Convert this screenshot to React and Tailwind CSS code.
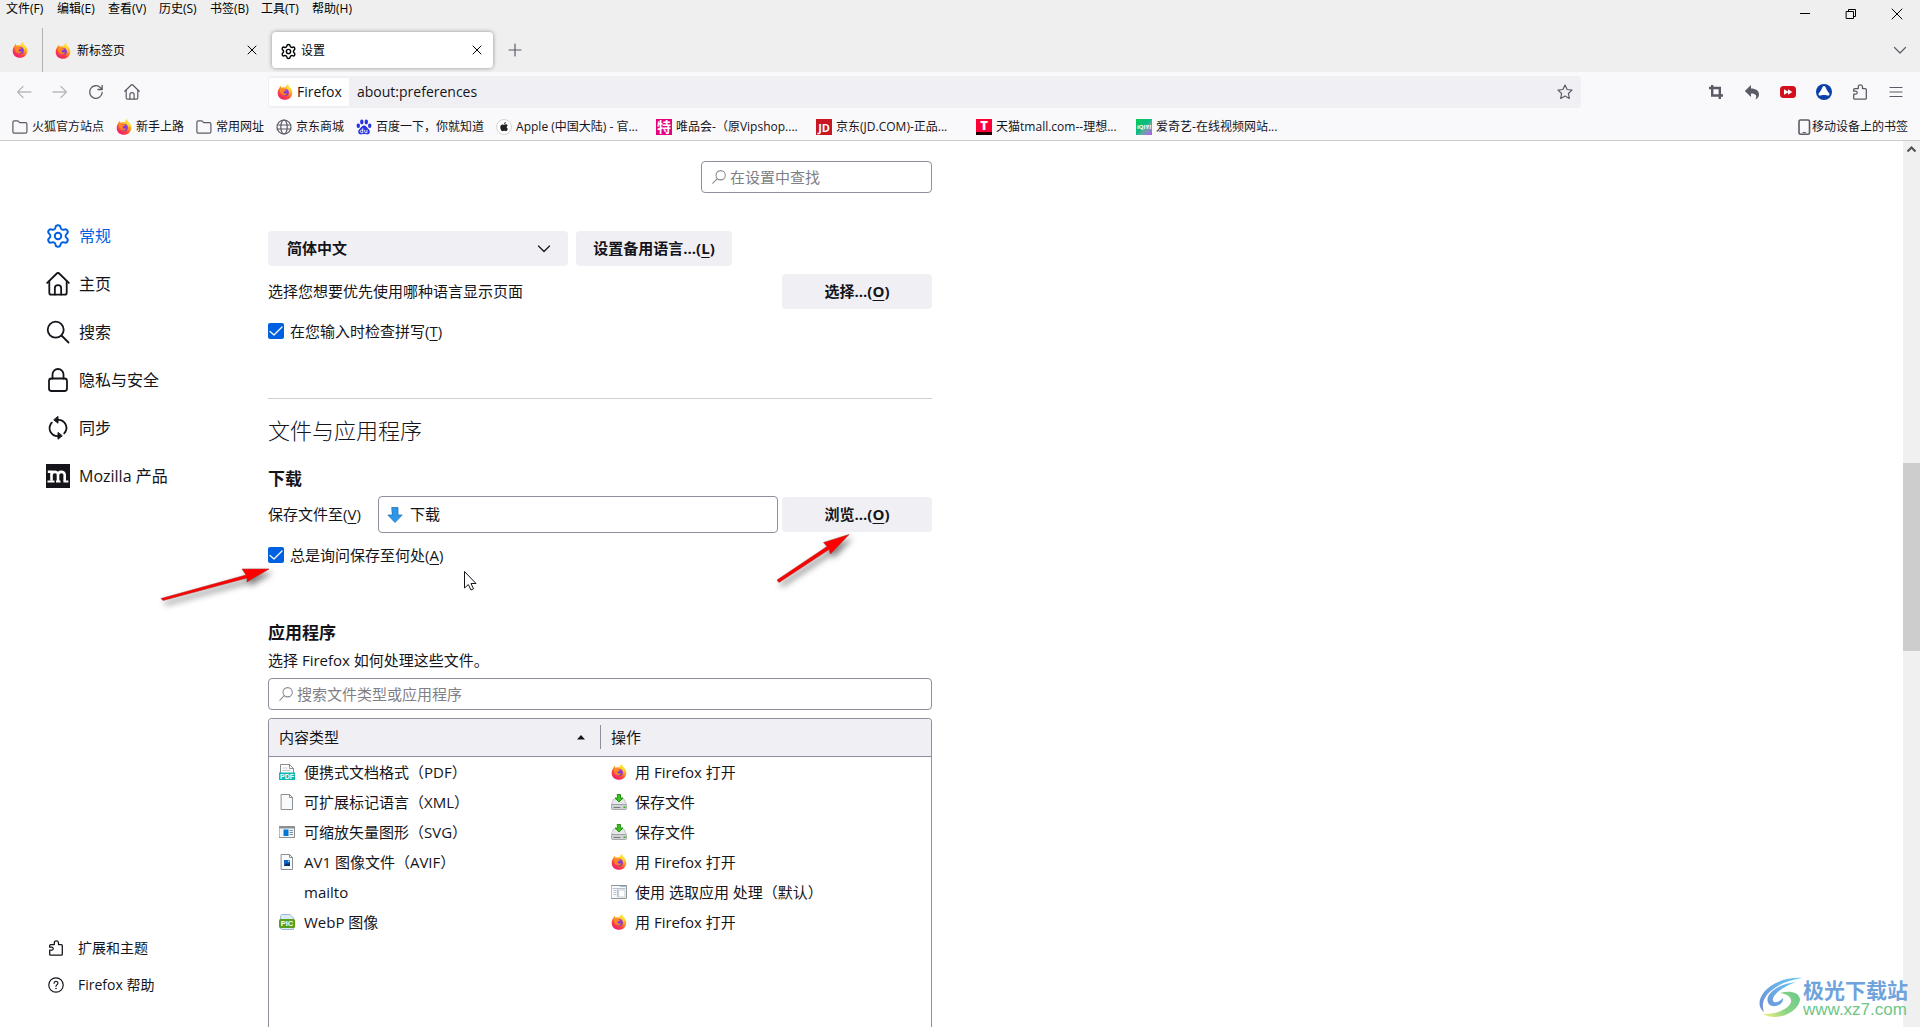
import React, { useId } from "react";
import { Settings } from "lucide-react";

function Svg({ size = 16, box = 16, className = "", children }) {
  return (
    <svg
      width={size}
      height={size}
      viewBox={`0 0 ${box} ${box}`}
      fill="none"
      stroke="currentColor"
      strokeLinecap="round"
      strokeLinejoin="round"
      aria-hidden="true"
      className={`shrink-0 ${className}`}
    >
      {children}
    </svg>
  );
}

function FirefoxLogo() {
  const id = useId();
  return (
    <Svg>
      <defs>
        <linearGradient id={`${id}b`} x1="13" y1="2" x2="4" y2="15" gradientUnits="userSpaceOnUse">
          <stop offset="0.05" stopColor="#fff14a" />
          <stop offset="0.35" stopColor="#ffa51c" />
          <stop offset="0.65" stopColor="#ff4a3c" />
          <stop offset="1" stopColor="#f01a72" />
        </linearGradient>
        <linearGradient id={`${id}c`} x1="10" y1="5" x2="7" y2="12" gradientUnits="userSpaceOnUse">
          <stop offset="0" stopColor="#a238e0" />
          <stop offset="1" stopColor="#5b3ad6" />
        </linearGradient>
        <linearGradient id={`${id}d`} x1="2" y1="3" x2="8" y2="9" gradientUnits="userSpaceOnUse">
          <stop offset="0" stopColor="#ff9a1a" />
          <stop offset="1" stopColor="#ff7a2a" />
        </linearGradient>
      </defs>
      <g stroke="none">
        <path
          fill={`url(#${id}b)`}
          d="M8 15.8C3.9 15.8.7 12.8.7 8.9c0-2.200.8-4 1.900-5.100C2.600 3 3 2.200 3.500 1.800c.2.900.7 1.500 1.400 1.900 1-.5 2.200-.6 3.300-.3C8.900 2.200 10 .8 11.200.1c0 1.300.6 2.200 1.600 3.100 1.600 1.400 2.500 3.200 2.500 5.500 0 4-3.200 7.100-7.300 7.100z"
        />
        <circle cx="8.300" cy="8.500" r="3.500" fill={`url(#${id}c)`} />
        <path
          fill={`url(#${id}d)`}
          d="M2.800 5.200c1.300-1 3.300-.8 4.700.1.800.1 1.600.5 1.900 1-.4.800-1.700.7-2.400 1.300-.5.500-.4 1.300.3 1.700 1 .6 2.100.2 3-.4-.3 1.900-2 3-3.900 2.500C4 10.800 2.500 8.300 2.800 5.200z"
        />
        <path fill="#ffd93b" fillOpacity="0.75" d="M9 2.900c1.900 1 3.600 3 3.500 5.600 1.200-2 .7-4.100-.9-5.800C11 2 11 1.200 11.200.1 10.300.7 9.500 1.800 9 2.900z" />
      </g>
    </Svg>
  );
}

function Folder() {
  return (
    <Svg className="text-[#5b5b66]">
      <path strokeWidth="1.200" d="M.9 12.800V3.200c0-.8.500-1.300 1.300-1.300h3.300c.5 0 .9.200 1.200.6l.9 1.200h5.900c.8 0 1.400.6 1.400 1.400v7.700c0 .8-.6 1.400-1.400 1.400H2.300c-.8 0-1.400-.6-1.400-1.400z" />
    </Svg>
  );
}

function Globe() {
  return (
    <Svg className="text-[#5b5b66]">
      <g strokeWidth="1.200">
        <circle cx="8" cy="8" r="7" />
        <ellipse cx="8" cy="8" rx="3.200" ry="7" />
        <path d="M1.200 6h13.600M1.200 10h13.600" />
      </g>
    </Svg>
  );
}

function Paw() {
  return (
    <Svg>
      <g fill="#2932e1" stroke="none">
        <ellipse cx="5.800" cy="3" rx="1.700" ry="2.400" />
        <ellipse cx="10.300" cy="3" rx="1.700" ry="2.400" />
        <ellipse cx="2.300" cy="6.800" rx="1.700" ry="2.200" />
        <ellipse cx="13.700" cy="6.800" rx="1.700" ry="2.200" />
        <path d="M8 6.600c1.800 0 2.600 1.500 3.700 2.600 1.300 1.200 2.500 2.300 2 4.200-.4 1.700-2 2.200-3.600 1.900-1.400-.3-2.800-.3-4.200 0-1.600.3-3.200-.2-3.600-1.900-.5-1.900.7-3 2-4.200C5.400 8.100 6.200 6.600 8 6.600z" />
      </g>
      <path stroke="#fff" strokeWidth="0.900" d="M6.800 9.600v4H5.400c-1.600 0-1.600-2.400 0-2.400h1.200M8.800 11.200v1.800c0 .5.300.7.700.7h1.500v-2.500" />
    </Svg>
  );
}

function Apple() {
  return (
    <Svg>
      <circle cx="8" cy="8" r="7.500" fill="#fff" stroke="#d4d4d8" />
      <g fill="#222" stroke="none">
        <path d="M8.100 5.700c.6 0 1.100-.4 1.800-.4.800 0 1.400.4 1.800.9-1.500 1-1.200 3 .2 3.600-.4 1.200-1.200 2.400-2 2.400-.6 0-.9-.4-1.700-.4s-1.100.4-1.700.4C5.500 12.200 4.300 10.200 4.300 8.200c0-1.800 1.100-2.800 2.200-2.800.7 0 1.200.3 1.600.3z" />
        <path d="M8 5.200c0-1.200.7-2 1.800-2.200C9.900 4.200 9 5.200 8 5.200z" />
      </g>
    </Svg>
  );
}

function TextBadge({ children, className }) {
  return (
    <span aria-hidden="true" className={`flex size-4 shrink-0 items-center justify-center leading-none ${className}`}>
      {children}
    </span>
  );
}

function Magnifier({ className }) {
  return (
    <Svg size={14} className={className}>
      <circle cx="9.900" cy="6" r="5.300" strokeWidth="1.200" />
      <path strokeWidth="1.200" d="M6.100 9.900.8 15.200" />
    </Svg>
  );
}

function Puzzle() {
  return (
    <Svg>
      <path
        strokeWidth="1.300"
        d="M1.700 10.200v4c0 .6.400 1 1 1h10.600c.6 0 1-.4 1-1V5.600c0-.6-.4-1-1-1h-2.800V2.900a2.100 2.100 0 0 0-4.200 0v1.700H2.700c-.6 0-1 .4-1 1v1.600h2a1.500 1.500 0 0 1 0 3z"
      />
    </Svg>
  );
}

function HomeIcon({ size = 16, weight = 1.2 }) {
  return (
    <Svg size={size}>
      <g strokeWidth={weight}>
        <path d="M.8 7.300 7.200 1c.5-.5 1.100-.5 1.600 0l6.400 6.300" />
        <path d="M2.200 6.200v7.600c0 .8.500 1.300 1.300 1.300h9c.8 0 1.300-.5 1.300-1.300V6.200" />
        <path d="M5.900 15v-4.300c0-1.200.9-2 2.100-2s2.100.8 2.100 2V15" />
      </g>
    </Svg>
  );
}

function MagnifierLarge() {
  return (
    <Svg size={24} box={24}>
      <g strokeWidth="1.800">
        <circle cx="9.700" cy="9.700" r="8" />
        <path d="m15.500 15.500 7 7" />
      </g>
    </Svg>
  );
}

function LockIcon() {
  return (
    <Svg size={24} box={24}>
      <g strokeWidth="1.800">
        <rect x="3" y="10.500" width="18" height="12.500" rx="2.500" />
        <path d="M6.500 10.500V6.500a5.500 5.500 0 0 1 11 0v4" />
      </g>
    </Svg>
  );
}

function SyncIcon() {
  return (
    <Svg size={24} box={24}>
      <g strokeWidth="1.800">
        <path d="M11 3.800h1.500a8 8 0 0 1 7 11.700 6 6 0 0 1-1.300 1.800" />
        <path d="M13 20.200h-1.500a8 8 0 0 1-7-11.700 6 6 0 0 1 1.300-1.800" />
      </g>
      <g fill="currentColor" strokeWidth="1">
        <path d="M12 .8v6.400L8 4z" />
        <path d="M12 16.800v6.400l4-3.200z" />
      </g>
    </Svg>
  );
}

function MozillaIcon() {
  return (
    <span aria-hidden="true" className="flex size-6 shrink-0 items-center justify-center bg-[#15141a]">
      <svg width="24" height="24" viewBox="0 0 24 24" fill="none" stroke="#fff" strokeWidth="2.600">
        <path d="M1.800 7.700h3.700v9M5.500 11c0-4 6.500-4.300 6.500 0v6M12 11c0-4 6.700-4.300 6.700 0v6" />
        <path strokeWidth="2" d="M1.500 17.400h7M10 17.400h4.500M17.400 17.400h5" />
      </svg>
    </span>
  );
}

function HelpIcon() {
  return (
    <Svg>
      <g strokeWidth="1.200">
        <circle cx="8" cy="8" r="7.200" />
        <path d="M6.100 6.200a1.900 1.900 0 1 1 2.900 1.600c-.6.400-1 .8-1 1.500" />
      </g>
      <circle cx="8" cy="11.500" r="0.800" fill="currentColor" stroke="none" />
    </Svg>
  );
}

function PdfFile() {
  return (
    <Svg>
      <path fill="#fff" stroke="#8a8f94" d="M1.500 9V.5h9l4 4V9" />
      <path stroke="#8a8f94" d="M10.500.5v4h4" />
      <path stroke="#c4c8cc" d="M4 4h4M4 6.500h7" />
      <rect y="8.500" width="16" height="7.500" fill="#10b5ad" stroke="none" />
      <text x="8" y="14.800" textAnchor="middle" fill="#fff" stroke="none" fontSize="7" fontWeight="700" fontFamily="Liberation Sans, sans-serif">PDF</text>
    </Svg>
  );
}

function BlankFile({ picture }) {
  return (
    <Svg>
      <path fill="#f8fafc" stroke="#8a8f94" strokeWidth="1" d="M2.500.5h8l3 3v12h-11z" />
      <path stroke="#8a8f94" d="M10.500.5v3h3" />
      {picture && (
        <g stroke="none">
          <rect x="5" y="6" width="6" height="6" fill="#0a66c8" />
          <path fill="#0b2f5c" d="m5 12 2.500-3 1.500 1 2-1.500V12z" />
          <rect x="9" y="6.500" width="1.500" height="1.500" fill="#9fd4ff" />
        </g>
      )}
    </Svg>
  );
}

function SvgFile() {
  return (
    <Svg>
      <rect x="0.500" y="2.500" width="15" height="11" fill="#f4f6f8" stroke="#8a8f94" />
      <path stroke="#8a8f94" strokeWidth="2" d="M1 3.500h14" />
      <rect x="4.500" y="5.500" width="5" height="6.500" fill="#0078d7" stroke="none" />
      <path stroke="#8a8f94" strokeLinecap="butt" d="M10.500 6.500H14M10.500 8.500H14M10.500 10.500H14" />
    </Svg>
  );
}

function PicFile() {
  return (
    <Svg>
      <path fill="#dbeaf6" stroke="#9dbbd3" d="M1.500 14V2.500c0-1 .5-2 1.500-2h8l3.500 3.500v11.500H3c-1 0-1.500-.6-1.500-1.500z" />
      <rect y="5" width="16" height="9" rx="1.500" fill="#57a01c" stroke="none" />
      <text x="8" y="12.300" textAnchor="middle" fill="#fff" stroke="none" fontSize="7.500" fontWeight="700" fontFamily="Liberation Sans, sans-serif">PIC</text>
    </Svg>
  );
}

function SaveDisk() {
  return (
    <Svg>
      <path fill="#e6e7e8" stroke="#b5b7ba" strokeWidth="0.800" d="M3 5h10l2.500 5.500H.5z" />
      <rect x="0.500" y="10.500" width="15" height="5" rx="1" fill="#cfd1d3" stroke="#97999c" strokeWidth="0.800" />
      <path stroke="#5e6165" d="M3 13.500h6" strokeWidth="0.800" />
      <rect x="12.500" y="12.500" width="2" height="1.500" fill="#35b51b" stroke="none" />
      <path fill="#3fc41f" stroke="#1a8a08" strokeWidth="0.900" d="M6.500.5h3V4H12L8 8 4 4h2.500z" />
    </Svg>
  );
}

function AppWindow() {
  return (
    <Svg>
      <rect x="0.500" y="1.500" width="15" height="13" fill="#f7f9fb" stroke="#8f979e" />
      <path stroke="#b9c2ca" d="M2 4.500h12M6.500 5v8M3 6.500h2M3 8.500h2M3 10.500h2" />
      <rect x="8" y="6" width="6" height="7" fill="#fff" stroke="#c3cbd2" />
      <path stroke="#3f7fc4" strokeLinecap="butt" d="M9.500 2.500h1M11.500 2.500h1M13.500 2.500h1" />
    </Svg>
  );
}

const menus = ["文件(F)", "编辑(E)", "查看(V)", "历史(S)", "书签(B)", "工具(T)", "帮助(H)"];

const bookmarks = [
  [<Folder />, "火狐官方站点"],
  [<FirefoxLogo />, "新手上路"],
  [<Folder />, "常用网址"],
  [<Globe />, "京东商城"],
  [<Paw />, "百度一下，你就知道"],
  [<Apple />, "Apple (中国大陆) - 官...", true],
  [<TextBadge className="bg-[#e4007f] text-sm font-bold text-white">特</TextBadge>, "唯品会-（原Vipshop....", true],
  [<TextBadge className="bg-[#c81623] text-[11px] font-bold text-white">JD</TextBadge>, "京东(JD.COM)-正品...", true],
  [<TextBadge className="border-b-3 border-[#220000] bg-[#ff0036] text-[13px] font-black text-white">T</TextBadge>, "天猫tmall.com--理想...", true],
  [<TextBadge className="bg-linear-to-br from-[#00cc4c] via-[#12b886] to-[#b14cf0] text-[6px] font-bold text-white">iQIYI</TextBadge>, "爱奇艺-在线视频网站...", true],
];

const categories = [
  [<Settings size={26} strokeWidth={1.8} className="-mx-px shrink-0" />, "常规", true],
  [<HomeIcon size={24} />, "主页"],
  [<MagnifierLarge />, "搜索"],
  [<LockIcon />, "隐私与安全"],
  [<SyncIcon />, "同步"],
  [<MozillaIcon />, "Mozilla 产品"],
];

const fileTypes = [
  [<PdfFile />, "便携式文档格式（PDF）", <FirefoxLogo />, "用 Firefox 打开"],
  [<BlankFile />, "可扩展标记语言（XML）", <SaveDisk />, "保存文件"],
  [<SvgFile />, "可缩放矢量图形（SVG）", <SaveDisk />, "保存文件"],
  [<BlankFile picture />, "AV1 图像文件（AVIF）", <FirefoxLogo />, "用 Firefox 打开"],
  [null, "mailto", <AppWindow />, "使用 选取应用 处理（默认）"],
  [<PicFile />, "WebP 图像", <FirefoxLogo />, "用 Firefox 打开"],
];

function Cross({ label }) {
  return (
    <button type="button" aria-label={label} className="flex size-6 items-center justify-center">
      <Svg size={10} box={10}>
        <path d="m1 1 8 8M9 1 1 9" />
      </Svg>
    </button>
  );
}

function TitleBar() {
  return (
    <header className="flex h-18 items-stretch bg-[#efefef] text-xs text-black">
      <div className="flex min-w-0 flex-1 flex-col">
        <nav aria-label="菜单" className="flex h-[18px] items-center gap-3 pl-1.5">
          {menus.map((m) => (
            <button key={m} type="button" className="w-[39px] text-left whitespace-nowrap">{m}</button>
          ))}
        </nav>
        <div className="mt-2.5 flex flex-1 items-center" role="tablist" aria-label="标签页">
          <button type="button" role="tab" aria-selected="false" aria-label="Firefox" className="flex h-full w-[43px] items-center border-r border-[#b0b0b0] pl-3">
            <FirefoxLogo />
          </button>
          <div className="flex w-[229px] items-center pr-2 pl-3">
            <button type="button" role="tab" aria-selected="false" className="flex flex-1 items-center gap-1.5 pt-0.5">
              <FirefoxLogo />
              新标签页
            </button>
            <Cross label="关闭新标签页" />
          </div>
          <div className="flex h-9 w-[221px] items-center rounded bg-white pr-1 pl-2 shadow-[0_0_4px_rgba(0,0,0,0.4)]">
            <button type="button" role="tab" aria-selected="true" className="flex flex-1 items-center gap-1 pt-0.5">
              <Settings size={17} strokeWidth={2} />
              设置
            </button>
            <Cross label="关闭设置" />
          </div>
          <button type="button" aria-label="新建标签页" className="ml-2 flex size-7 items-center justify-center text-[#5b5b66]">
            <Svg size={14} box={14}>
              <path strokeWidth="1.200" d="M7 1v12M1 7h12" />
            </Svg>
          </button>
        </div>
      </div>
      <div className="flex flex-col items-end justify-between">
        <div className="flex">
          <button type="button" aria-label="最小化" className="flex h-7 w-[46px] items-center justify-center">
            <Svg size={12} box={12}><path strokeLinecap="butt" d="M1 5.500h10" /></Svg>
          </button>
          <button type="button" aria-label="还原" className="flex h-7 w-[46px] items-center justify-center">
            <Svg size={12} box={12}><path strokeLinejoin="miter" d="M1.500 3.500h7v7h-7zM3.500 3.500v-2h7v7h-2" /></Svg>
          </button>
          <button type="button" aria-label="关闭" className="flex h-7 w-[46px] items-center justify-center">
            <Svg size={12} box={12}><path d="m1 1 10 10M11 1 1 11" /></Svg>
          </button>
        </div>
        <button type="button" aria-label="列出所有标签页" className="flex h-11 w-10 items-center justify-center text-[#5b5b66]">
          <Svg><path strokeWidth="1.200" d="m2.500 5.500 5.500 5.500 5.500-5.500" /></Svg>
        </button>
      </div>
    </header>
  );
}

function IconButton({ label, className = "", children }) {
  return (
    <button type="button" aria-label={label} className={`flex h-8 w-9 shrink-0 items-center justify-center ${className}`}>
      {children}
    </button>
  );
}

function Toolbar() {
  return (
    <div className="flex h-10 items-center bg-[#f9f9fb] pr-1.5 pl-1.5 text-[#5b5b66]">
      <div className="flex w-[262px] shrink-0">
        <IconButton label="后退" className="opacity-40">
          <Svg><path strokeWidth="1.300" d="M15 8H1.500M7 2.500 1.500 8 7 13.500" /></Svg>
        </IconButton>
        <IconButton label="前进" className="opacity-40">
          <Svg><path strokeWidth="1.300" d="M1 8h13.500M9 2.500 14.500 8 9 13.500" /></Svg>
        </IconButton>
        <IconButton label="刷新">
          <Svg><path strokeWidth="1.300" d="M14.200 8.500A6.300 6.300 0 1 1 12.400 3.600L14 5.200M14.200 1.300v4.200h-4.200" /></Svg>
        </IconButton>
        <IconButton label="主页"><HomeIcon /></IconButton>
      </div>
      <div className="flex h-8 min-w-0 flex-1 items-center rounded bg-[#f0f0f4] pl-px text-sm text-[#15141a]">
        <span className="flex h-7 w-20 items-center gap-1 rounded-xs bg-white pl-2">
          <FirefoxLogo />
          Firefox
        </span>
        <input aria-label="网址" defaultValue="about:preferences" className="min-w-0 flex-1 bg-transparent pl-2 outline-none" />
        <button type="button" aria-label="收藏" className="flex size-8 items-center justify-center text-[#5b5b66]">
          <Svg><path strokeWidth="1.200" d="m8 1 2.100 4.500 4.900.6-3.600 3.400.9 4.900L8 12l-4.300 2.400.9-4.900L1 6.100l4.900-.6z" /></Svg>
        </button>
      </div>
      <div className="ml-[117px] flex shrink-0">
        <IconButton label="截图">
          <Svg><path strokeWidth="2.400" strokeLinecap="butt" strokeLinejoin="miter" d="M1 4h10.800v11M4.200 1v10.500H15" /></Svg>
        </IconButton>
        <IconButton label="撤销">
          <Svg><path fill="currentColor" stroke="none" d="M7 1v3.500c5 0 8 2.200 8 6 0 2.300-1.500 4.200-3.500 5 1.700-3.700.5-6-4.500-6V13L.8 7z" /></Svg>
        </IconButton>
        <IconButton label="视频下载">
          <Svg>
            <rect y="2" width="16" height="12" rx="3.500" fill="#d4101c" stroke="none" />
            <path fill="#fff" stroke="none" d="M4 5.300v5.400l4-2.300v2.300L12.300 8 8 5.300v2.300z" />
          </Svg>
        </IconButton>
        <IconButton label="扩展">
          <Svg>
            <circle cx="8" cy="8" r="8" fill="#0a3fa8" stroke="none" />
            <path fill="#fff" stroke="none" d="M8 2c.9 0 1.500.9 2 2.200.8 2 2.500 3.800 3.400 5.600.4 1-.1 1.800-1.200 1.800-1.200 0-2.600-.6-4.200-.6s-3 .6-4.200.6c-1.100 0-1.600-.8-1.200-1.800C3.500 8 5.200 6.200 6 4.200 6.500 2.900 7.100 2 8 2z" />
          </Svg>
        </IconButton>
        <IconButton label="扩展管理"><Puzzle /></IconButton>
        <IconButton label="打开应用程序菜单">
          <Svg><path strokeWidth="1.200" d="M2 3.500h12M2 8h12M2 12.500h12" /></Svg>
        </IconButton>
      </div>
    </div>
  );
}

function BookmarksBar() {
  return (
    <nav aria-label="书签" className="flex h-[29px] items-center justify-between border-b border-[#cccccc] bg-[#f9f9fb] px-3 pt-0.5 text-xs text-[#15141a]">
      <div className="flex min-w-0 items-center gap-3">
        {bookmarks.map(([icon, text, long]) => (
          <a key={text} href="#" className={`flex shrink-0 items-center gap-1 whitespace-nowrap ${long ? "w-37" : ""}`}>
            {icon}
            <span>{text}</span>
          </a>
        ))}
      </div>
      <a href="#" className="flex shrink-0 items-center">
        <Svg className="text-[#5b5b66]">
          <rect x="3" y="1" width="10.500" height="14.200" rx="1.500" strokeWidth="1.600" />
          <path d="M7 13.500h2.500" />
        </Svg>
        移动设备上的书签
      </a>
    </nav>
  );
}

function Sidebar() {
  return (
    <aside className="flex w-[268px] shrink-0 flex-col justify-between pt-[71px] pb-6 pl-[46px]">
      <nav aria-label="设置分类" className="flex flex-col text-base">
        {categories.map(([icon, text, active]) => (
          <a key={text} href="#" className={`flex h-12 items-center gap-[9px] ${active ? "text-[#0061e0]" : ""}`}>
            {icon}
            {text}
          </a>
        ))}
      </nav>
      <nav aria-label="更多" className="flex flex-col pl-0.5 text-sm">
        <a href="#" className="flex h-[37px] items-center gap-3.5"><Puzzle />扩展和主题</a>
        <a href="#" className="flex h-[37px] items-center gap-3.5"><HelpIcon />Firefox 帮助</a>
      </nav>
    </aside>
  );
}

function Key({ children }) {
  return <span className="underline underline-offset-3">{children}</span>;
}

function GreyButton({ className, children }) {
  return (
    <button type="button" className={`h-[35px] shrink-0 rounded bg-[#f0f0f4] pb-0.5 font-bold ${className}`}>
      {children}
    </button>
  );
}

function Check({ id, children }) {
  return (
    <div className="flex items-center gap-1.5">
      <span className="relative flex size-4">
        <input id={id} type="checkbox" defaultChecked className="size-4 appearance-none rounded-xs bg-[#0061e0]" />
        <span className="pointer-events-none absolute inset-0 text-white">
          <Svg><path strokeWidth="1.200" d="m2 8.500 4 3.500 8-8" /></Svg>
        </span>
      </span>
      <label htmlFor={id}>{children}</label>
    </div>
  );
}

function SearchField({ placeholder, className }) {
  return (
    <label className={`flex h-8 items-center gap-1 rounded border border-[#8f8f9d] bg-white pb-px pl-2.5 ${className}`}>
      <Magnifier className="text-[#8a8a8e]" />
      <input type="search" aria-label={placeholder} placeholder={placeholder} className="min-w-0 flex-1 bg-transparent outline-none placeholder:text-[#7f7f85]" />
    </label>
  );
}

function Preferences() {
  return (
    <main className="flex w-[664px] min-w-0 flex-col pt-5 text-[15px] leading-5">
      <SearchField placeholder="在设置中查找" className="w-[231px] self-end" />

      <section aria-label="语言" className="mt-[38px] flex flex-col">
        <div className="flex gap-2">
          <div className="relative w-[300px]">
            <select aria-label="语言" className="h-[35px] w-full appearance-none rounded bg-[#f0f0f4] pb-0.5 pl-[19px] font-bold">
              <option>简体中文</option>
            </select>
            <span className="pointer-events-none absolute inset-y-0 right-4 flex items-center">
              <Svg><path strokeWidth="1.200" d="m2.500 5 5.500 5.500L13.500 5" /></Svg>
            </span>
          </div>
          <GreyButton className="w-[156px]">设置备用语言...(<Key>L</Key>)</GreyButton>
        </div>
        <div className="mt-2 flex items-center justify-between">
          <span className="pb-0.5">选择您想要优先使用哪种语言显示页面</span>
          <GreyButton className="w-[150px]">选择...(<Key>O</Key>)</GreyButton>
        </div>
        <div className="mt-3">
          <Check id="spell">在您输入时检查拼写(<Key>T</Key>)</Check>
        </div>
      </section>

      <section aria-labelledby="files" className="mt-[57px] flex flex-1 flex-col border-t border-[#d0d0d4]">
        <h1 id="files" className="mt-[15px] text-[22px] leading-8 font-light">文件与应用程序</h1>
        <h2 className="mt-[21px] text-[17px] leading-6 font-bold">下载</h2>
        <div className="mt-[5px] flex items-center">
          <label htmlFor="folder" className="w-[110px] pb-0.5">保存文件至(<Key>V</Key>)</label>
          <div className="flex h-[37px] flex-1 items-center gap-[7px] rounded border border-[#8f8f9d] pl-2">
            <Svg>
              <path fill="#2f95e8" stroke="#2277bd" strokeWidth="0.800" d="M5 .5h6V8h4.200L8 15.500.8 8H5z" />
            </Svg>
            <input id="folder" readOnly value="下载" className="min-w-0 flex-1 pb-0.5 outline-none" />
          </div>
          <GreyButton className="ml-1 w-[150px]">浏览...(<Key>O</Key>)</GreyButton>
        </div>
        <div className="mt-3">
          <Check id="ask">总是询问保存至何处(<Key>A</Key>)</Check>
        </div>

        <h2 className="mt-14 text-[17px] leading-6 font-bold">应用程序</h2>
        <p className="mt-[5px]">选择 Firefox 如何处理这些文件。</p>
        <SearchField placeholder="搜索文件类型或应用程序" className="mt-2" />

        <div className="mt-2 flex-1 overflow-hidden rounded-t border border-b-0 border-[#8f8f9d]">
          <table className="w-full table-fixed border-collapse text-left">
            <thead className="bg-[#f0f0f4]">
              <tr className="h-[37px] border-b border-[#8f8f9d]">
                <th scope="col" className="w-[332px] p-0 font-normal">
                  <div className="flex h-6 items-center justify-between border-r border-[#8f8f9d] pr-3.5 pl-2.5">
                    内容类型
                    <Svg size={10} box={10}><path fill="currentColor" stroke="none" d="M1 7.500h8L5 3z" /></Svg>
                  </div>
                </th>
                <th scope="col" className="p-0 pl-2.5 font-normal">操作</th>
              </tr>
            </thead>
            <tbody>
              <tr className="h-px"><td colSpan={2} /></tr>
              {fileTypes.map(([icon, type, actionIcon, action]) => (
                <tr key={type} className="h-[30px]">
                  <td className="p-0 pl-2.5">
                    <span className="flex items-center gap-[9px]">
                      <span className="size-4">{icon}</span>
                      {type}
                    </span>
                  </td>
                  <td className="p-0 pl-2.5">
                    <span className="flex items-center gap-2">
                      {actionIcon}
                      {action}
                    </span>
                  </td>
                </tr>
              ))}
            </tbody>
          </table>
        </div>
      </section>
    </main>
  );
}

function Scrollbar() {
  return (
    <div aria-hidden="true" className="ml-auto flex w-[17px] shrink-0 flex-col items-center bg-[#f0f0f0] text-[#505050]">
      <Svg size={17} box={17}><path strokeWidth="2" strokeLinecap="butt" strokeLinejoin="miter" d="m4.500 10.500 4-4 4 4" /></Svg>
      <div className="mt-[305px] h-[188px] w-full bg-[#cdcdcd]" />
    </div>
  );
}

function Annotations() {
  return (
    <div aria-hidden="true" className="pointer-events-none absolute inset-0">
      <svg className="absolute top-[554px] left-[155px] drop-shadow-[3px_4px_3px_rgba(0,0,0,0.5)]" width="125" height="55" fill="#f00" stroke="#a33" strokeWidth="0.600">
        <path d="M6 44.500 91 21l-4-6 27 0-22 13 0-4L8 46.500z" />
      </svg>
      <svg className="absolute top-[525px] left-[770px] drop-shadow-[3px_4px_3px_rgba(0,0,0,0.5)]" width="90" height="65" fill="#f00" stroke="#a33" strokeWidth="0.600">
        <path d="m7 55 50-33.500-3.500-4L79 9.500 60.500 29 59 24.500 9 57.500z" />
      </svg>
      <svg className="absolute top-[570px] left-[463px]" width="14" height="22" fill="#fff" stroke="#15141a">
        <path d="M1.500 1.500v16.500l3.800-3.500 2.700 5.500 2.500-1.200-2.500-5.300h5z" />
      </svg>
    </div>
  );
}

function Watermark() {
  return (
    <div className="pointer-events-none absolute right-3 bottom-2 flex items-center">
      <svg width="45" height="42" viewBox="0 0 45 42" aria-hidden="true">
        <defs>
          <linearGradient id="swooshBlue" x1="40" y1="2" x2="6" y2="34" gradientUnits="userSpaceOnUse">
            <stop offset="0" stopColor="#66c8f4" />
            <stop offset="1" stopColor="#6f90d8" />
          </linearGradient>
          <linearGradient id="swooshGreen" x1="40" y1="16" x2="6" y2="40" gradientUnits="userSpaceOnUse">
            <stop offset="0" stopColor="#6bcb8a" />
            <stop offset="0.500" stopColor="#8fd486" />
            <stop offset="1" stopColor="#eef07a" />
          </linearGradient>
        </defs>
        <path fill="url(#swooshBlue)" d="M44 1C30 0 14 5 6 15c-6 8-6 15 0 20-3-8 0-16 8-22C22 6 33 3 44 1z" />
        <path fill="url(#swooshBlue)" d="M38 5C26 6 13 12 10 20c-2 6 2 10 8 9 5-1 8-5 7-8-3 3-6 5-9 4-3-2 0-7 5-11 5-4 11-7 17-9z" />
        <path fill="url(#swooshGreen)" d="M22 16c9-3 19-1 20 6 0 9-13 18-25 18-5 0-9-1-12-3 12 1 26-5 28-12 1-5-4-8-11-9z" />
      </svg>
      <div className="flex flex-col font-bold">
        <span className="text-[21px] leading-6 text-[#6fa3dc]">极光下载站</span>
        <span className="font-['Liberation_Sans',sans-serif] text-[17px] leading-4 font-normal text-[#6cc788]">www.xz7.com</span>
      </div>
    </div>
  );
}

export default function App() {
  return (
    <div className="relative flex h-screen flex-col overflow-hidden bg-white font-['Open_Sans','Noto_Sans_CJK_SC',sans-serif] text-[#15141a]">
      <TitleBar />
      <Toolbar />
      <BookmarksBar />
      <div className="flex min-h-0 flex-1">
        <Sidebar />
        <Preferences />
        <Scrollbar />
      </div>
      <Annotations />
      <Watermark />
    </div>
  );
}
